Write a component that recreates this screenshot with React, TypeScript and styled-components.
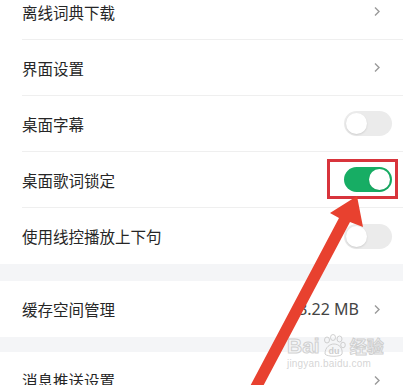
import React from 'react';
import styled, { createGlobalStyle } from 'styled-components';

const GlobalStyle = createGlobalStyle`
  html, body {
    margin: 0;
    padding: 0;
    background: #ffffff;
  }
  body {
    font-family: "Noto Sans CJK SC", "Noto Sans", sans-serif;
    overflow: hidden;
  }
`;

const Page = styled.div`
  position: relative;
  width: 403px;
  height: 385px;
  overflow: hidden;
  background: #ffffff;
`;

const List = styled.div`
  display: flex;
  flex-direction: column;
  margin-top: -16px;
`;

const Group = styled.div`
  display: flex;
  flex-direction: column;
  background: #ffffff;
`;

const Gap = styled.div<{ $h: number }>`
  height: ${p => p.$h}px;
  background: #f4f5f7;
`;

const Row = styled.div<{ $divider?: boolean }>`
  display: flex;
  align-items: center;
  height: 56px;
  margin-left: 22px;
  padding-right: 20px;
  box-sizing: border-box;
  border-bottom: ${p => (p.$divider ? '1px solid #efefef' : 'none')};
`;

const Label = styled.div`
  flex: 1;
  font-size: 15.5px;
  color: #262626;
  letter-spacing: 0;
`;

const Value = styled.span`
  font-family: "Noto Sans", "Noto Sans CJK SC", sans-serif;
  font-size: 16px;
  color: #444;
  margin-right: 14px;
`;

const Chevron = styled.svg`
  width: 8px;
  height: 11px;
  margin-right: 2px;
`;

const SwitchWrap = styled.div`
  position: relative;
  margin-right: -9px;
`;

const Switch = styled.div<{ $on?: boolean }>`
  position: relative;
  width: 48px;
  height: 25px;
  border-radius: 13px;
  background: ${p => (p.$on ? '#17ad64' : '#ebebeb')};

  &::after {
    content: '';
    position: absolute;
    top: 2px;
    left: ${p => (p.$on ? '25px' : '2px')};
    width: 21px;
    height: 21px;
    border-radius: 50%;
    background: #ffffff;
    box-shadow: 0 1px 2px rgba(0, 0, 0, 0.12);
  }
`;

const Highlight = styled.div`
  position: absolute;
  left: -17px;
  right: -6px;
  top: -8px;
  bottom: -7px;
  border: 3px solid #d8343c;
  pointer-events: none;
`;

const Overlay = styled.svg`
  position: absolute;
  left: 0;
  top: 0;
  pointer-events: none;
`;

const Watermark = styled.div`
  position: absolute;
  left: 287px;
  top: 334px;
  display: flex;
  flex-direction: column;
  align-items: flex-start;
  pointer-events: none;
`;

const MarkTop = styled.div`
  display: flex;
  align-items: center;
  gap: 1px;
  font-family: "Liberation Sans", Arial, sans-serif;
  font-size: 21px;
  font-weight: bold;
  line-height: 24px;
  color: transparent;
  -webkit-text-stroke: 1px rgba(200, 200, 200, 0.85);
`;

const MarkCn = styled.span`
  font-family: "Noto Sans CJK SC", sans-serif;
  font-size: 17px;
  margin-left: 2px;
`;

const MarkUrl = styled.div`
  font-family: "Liberation Sans", Arial, sans-serif;
  font-size: 10px;
  line-height: 12px;
  color: rgba(205, 205, 205, 0.85);
  letter-spacing: 0.2px;
`;

const ChevronIcon = () => (
  <Chevron viewBox="0 0 8 11">
    <path d="M2 1.5 L6 5.5 L2 9.5" fill="none" stroke="#9a9a9a" strokeWidth="1.4" />
  </Chevron>
);

const Toggle = ({ on, marked }: { on?: boolean; marked?: boolean }) => (
  <SwitchWrap>
    <Switch $on={on} />
    {marked && <Highlight />}
  </SwitchWrap>
);

const Paw = () => (
  <svg width="26" height="24" viewBox="0 0 26 24">
    <g fill="none" stroke="rgba(200,200,200,0.85)" strokeWidth="1">
      <ellipse cx="6" cy="6" rx="2.5" ry="3" />
      <ellipse cx="12" cy="3.5" rx="2.5" ry="3" />
      <ellipse cx="18.5" cy="5" rx="2.5" ry="3" />
      <ellipse cx="22" cy="11" rx="2.3" ry="2.8" />
      <path d="M4 20 C4 13 9 10 13 10 C18 10 22 14 21 20 C20 23 6 23 4 20 Z" />
    </g>
    <text x="13" y="20" textAnchor="middle" fontSize="9" fontFamily="Liberation Sans, Arial, sans-serif" fontWeight="bold" fill="rgba(200,200,200,0.9)">du</text>
  </svg>
);

export default function App() {
  return (
    <Page>
      <GlobalStyle />
      <List>
        <Group>
          <Row $divider>
            <Label>离线词典下载</Label>
            <ChevronIcon />
          </Row>
          <Row $divider>
            <Label>界面设置</Label>
            <ChevronIcon />
          </Row>
          <Row $divider>
            <Label>桌面字幕</Label>
            <Toggle />
          </Row>
          <Row $divider>
            <Label>桌面歌词锁定</Label>
            <Toggle on marked />
          </Row>
          <Row>
            <Label>使用线控播放上下句</Label>
            <Toggle />
          </Row>
        </Group>
        <Gap $h={17} />
        <Group>
          <Row>
            <Label>缓存空间管理</Label>
            <Value>3.22 MB</Value>
            <ChevronIcon />
          </Row>
        </Group>
        <Gap $h={15} />
        <Group>
          <Row>
            <Label>消息推送设置</Label>
            <ChevronIcon />
          </Row>
        </Group>
      </List>

      <Watermark>
        <MarkTop>
          <span>Bai</span>
          <Paw />
          <MarkCn>经验</MarkCn>
        </MarkTop>
        <MarkUrl>jingyan.baidu.com</MarkUrl>
      </Watermark>

      <Overlay width="403" height="385" viewBox="0 0 403 385">
        <polygon
          points="357,196 363,227 350,222 260,392 247,392 339,218 330,213"
          fill="#e8412f"
        />
      </Overlay>
    </Page>
  );
}
